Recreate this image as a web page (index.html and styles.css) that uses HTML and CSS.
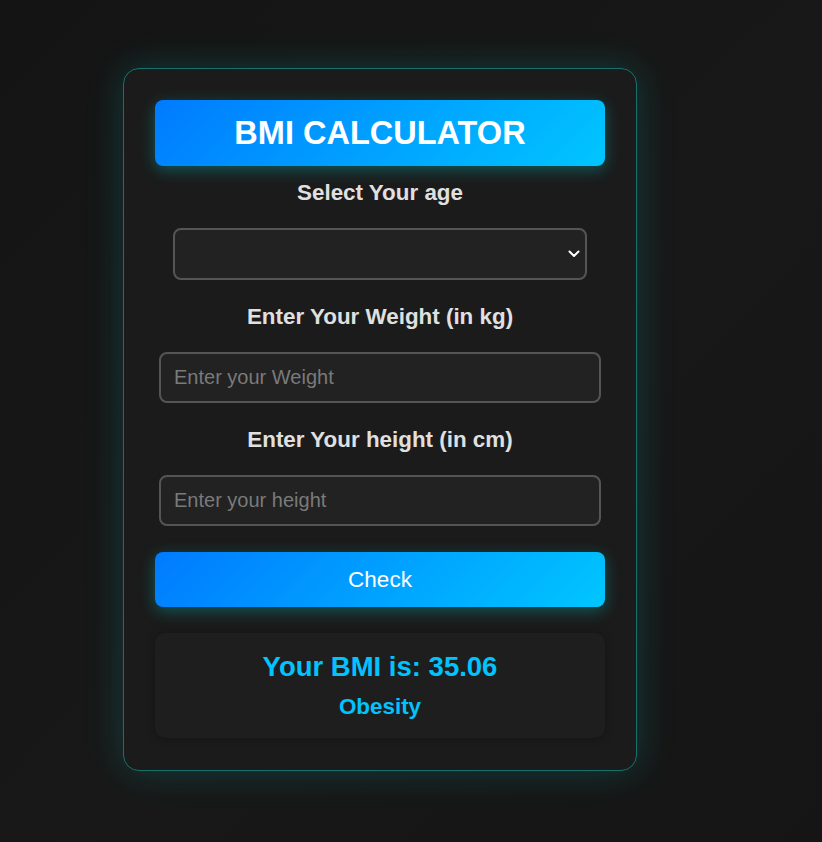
FILE: index.html
```html
<!DOCTYPE html>
<html lang="en">
<head>
<meta charset="utf-8">
<title>BMI Calculator</title>
<link rel="stylesheet" href="styles.css">
</head>
<body>
  <div class="card">
    <h1 class="title">BMI CALCULATOR</h1>
    <label class="label">Select Your age</label>
    <div class="select-wrap">
      <select class="select"><option></option></select>
      <svg class="chev" width="12" height="8" viewBox="0 0 12 8"><path d="M1.5 1.5 L6 6 L10.5 1.5" fill="none" stroke="#fff" stroke-width="2" stroke-linecap="round" stroke-linejoin="round"/></svg>
    </div>
    <label class="label">Enter Your Weight (in kg)</label>
    <input class="input" type="text" placeholder="Enter your Weight">
    <label class="label">Enter Your height (in cm)</label>
    <input class="input" type="text" placeholder="Enter your height">
    <button class="btn">Check</button>
    <div class="result">
      <div class="bmi">Your BMI is: 35.06</div>
      <div class="cat">Obesity</div>
    </div>
  </div>
</body>
</html>
```
FILE: styles.css
```css
html, body {
  margin: 0;
  height: 100%;
}
body {
  background: linear-gradient(135deg, #141414 0%, #181818 55%, #151515 100%);
  font-family: "Liberation Sans", Arial, sans-serif;
  padding: 68px 0 0 123px;
  box-sizing: border-box;
}
.card {
  width: 514px;
  box-sizing: border-box;
  background: #1b1b1b;
  border: 1px solid #16706e;
  border-radius: 16px;
  padding: 31px 31px 32px;
  box-shadow: 0 0 36px rgba(0, 200, 190, 0.22);
  display: flex;
  flex-direction: column;
  align-items: center;
}
.title {
  margin: 0;
  width: 100%;
  height: 66px;
  display: flex;
  align-items: center;
  justify-content: center;
  background: linear-gradient(135deg, #007bff 0%, #00c6ff 100%);
  border-radius: 8px;
  color: #fff;
  font-size: 32.5px;
  font-weight: bold;
  box-shadow: 0 4px 15px rgba(0, 200, 200, 0.35);
}
.label {
  display: block;
  color: #e0e0e0;
  font-size: 22.4px;
  font-weight: bold;
  line-height: 26px;
  margin-top: 14px;
  margin-bottom: 22px;
}
.select-wrap + .label {
  margin-top: 24px;
}
.input + .label {
  margin-top: 24px;
}
.select-wrap {
  position: relative;
  width: 414px;
  height: 52px;
}
.select {
  width: 100%;
  height: 100%;
  box-sizing: border-box;
  background: #222;
  border: 2px solid #555;
  border-radius: 8px;
  color: #fff;
  appearance: none;
  -webkit-appearance: none;
  font-size: 18px;
  padding: 0 12px;
  outline: none;
}
.chev {
  position: absolute;
  left: 395px;
  top: 22px;
  pointer-events: none;
}
.input {
  width: 442px;
  height: 51px;
  box-sizing: border-box;
  background: #222;
  border: 2px solid #555;
  border-radius: 8px;
  color: #fff;
  font-family: "Liberation Sans", Arial, sans-serif;
  font-size: 20px;
  padding: 0 13px;
  outline: none;
}
.input::placeholder {
  color: #7a7a7a;
}
.btn {
  margin-top: 26px;
  width: 100%;
  height: 55px;
  border: none;
  border-radius: 8px;
  background: linear-gradient(135deg, #007bff 0%, #00c6ff 100%);
  color: #fff;
  font-family: "Liberation Sans", Arial, sans-serif;
  font-size: 22.5px;
  box-shadow: 0 4px 15px rgba(0, 200, 200, 0.35);
}
.result {
  margin-top: 26px;
  width: 100%;
  height: 105px;
  box-sizing: border-box;
  background: #1e1e1e;
  border-radius: 10px;
  box-shadow: 0 0 10px rgba(0, 0, 0, 0.3);
  display: flex;
  flex-direction: column;
  align-items: center;
  padding-top: 18px;
  color: #00c3ff;
  font-weight: bold;
}
.bmi {
  font-size: 27.5px;
  line-height: 32px;
}
.cat {
  font-size: 22.4px;
  line-height: 26px;
  margin-top: 11px;
}
```
